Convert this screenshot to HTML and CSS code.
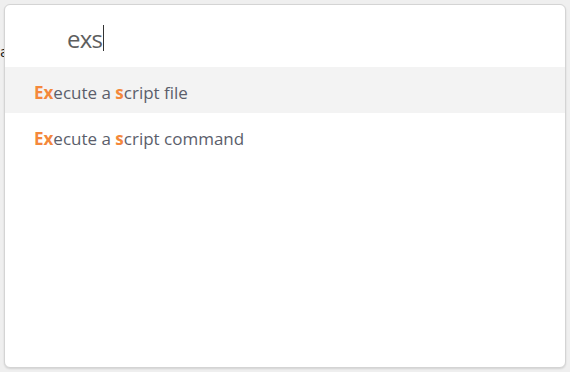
FILE: index.html
```html
<!DOCTYPE html>
<html lang="en">
<head>
  <meta charset="UTF-8">
  <title>Command palette</title>
  <link rel="stylesheet" href="styles.css">
</head>
<body>
  <!-- Page content behind the palette -->
  <div class="backdrop">a</div>

  <!-- Command palette -->
  <div class="palette">
    <div class="search">
      <span class="query">exs</span><span class="caret"></span>
    </div>
    <ul class="results">
      <li class="result active"><b>Ex</b>ecute a <b>s</b>cript file</li>
      <li class="result"><b>Ex</b>ecute a <b>s</b>cript command</li>
    </ul>
  </div>
</body>
</html>
```

FILE: styles.css
```css
/* Global Styles */
body {
  margin: 0;
  background: #efefef;
  font-family: "Open Sans", "Noto Sans", sans-serif;
  block-size: 372px;
  overflow: hidden;
}

.backdrop {
  padding: 44px 0 0 0;
  font-size: 14px;
  color: #111;
  font-family: "DejaVu Sans", sans-serif;
}

/* Palette */
.palette {
  position: absolute;
  top: 4px;
  left: 4px;
  inline-size: 560px;
  block-size: 362px;
  background: #fff;
  border: 1px solid #d4d4d4;
  border-radius: 6px;
  box-shadow: 0 1px 2px rgba(0, 0, 0, 0.12);
  overflow: hidden;
}

.search {
  display: flex;
  align-items: center;
  block-size: 62px;
  padding: 4px 0 0 62px;
  box-sizing: border-box;
}

.query {
  font-size: 24px;
  color: #5e5e5e;
  letter-spacing: -0.8px;
}

.caret {
  inline-size: 1px;
  block-size: 26px;
  background: #333;
  margin-left: 1px;
}

.results {
  list-style: none;
  margin: 0;
  padding: 0;
}

.result {
  block-size: 46px;
  box-sizing: border-box;
  display: flex;
  align-items: center;
  padding: 5px 0 0 29px;
  font-size: 17px;
  color: #5b5e6b;
  white-space: pre;
}

.result.active {
  background: #f3f3f3;
}

.result b {
  color: #f4883b;
  font-weight: 700;
}
```
